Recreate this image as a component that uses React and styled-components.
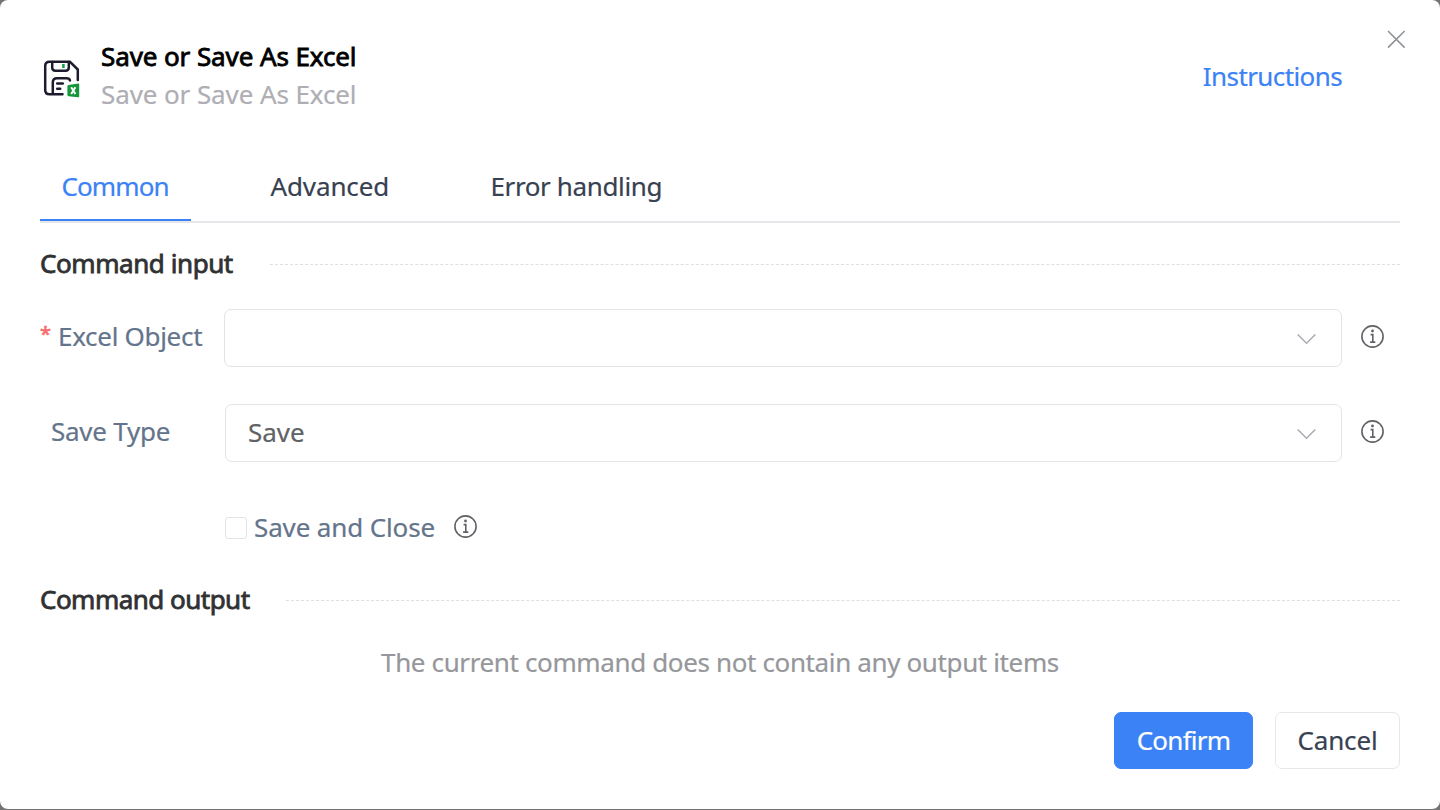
import React from 'react';
import styled, { createGlobalStyle } from 'styled-components';

const GlobalStyle = createGlobalStyle`
  * { box-sizing: border-box; }
  body {
    margin: 0;
    background: #737373;
    font-family: "Noto Sans", "Open Sans", sans-serif;
    font-size: 26px;
    line-height: 38px;
    color: #374151;
  }
`;

const Dialog = styled.main`
  position: relative;
  display: flex;
  flex-direction: column;
  width: 1440px;
  height: 809px;
  padding: 38px 40px 40px;
  background: #fff;
  border-radius: 8px;
  overflow: hidden;
`;

const Text = styled.span`
  display: block;
  margin: -1px 0 1px;
  white-space: nowrap;
  letter-spacing: ${(p) => p.$track || 0}px;
  -webkit-text-stroke: 0.2px currentColor;
`;

const Header = styled.header`
  display: flex;
  align-items: center;
  height: 76px;
`;

const FileIcon = styled.svg`
  flex: none;
  width: 44px;
  height: 44px;
  margin-top: 9px;
`;

const Titles = styled.div`
  display: flex;
  flex-direction: column;
  flex: 1;
  margin-left: 17px;
`;

const Title = styled(Text)`
  color: #000;
  -webkit-text-stroke: 0.8px #000;
`;

const Subtitle = styled(Text)`
  color: #aeaeb4;
`;

const Instructions = styled(Text)`
  margin: 0 58px 0 0;
  color: #3b82f6;
`;

const CloseButton = styled.button`
  position: absolute;
  top: 30px;
  right: 34px;
  width: 20px;
  height: 20px;
  padding: 0;
  border: 0;
  background: none;
  svg { display: block; }
`;

const Tabs = styled.nav`
  display: flex;
  flex: none;
  gap: 58px;
  height: 69px;
  margin-top: 40px;
  padding-top: 14px;
  border-bottom: 2px solid #e5e7eb;
`;

const Tab = styled.div`
  display: flex;
  flex: none;
  width: ${(p) => p.$width}px;
  height: 53px;
  padding-left: 21.5px;
  color: ${(p) => (p.$active ? '#3b82f6' : '#374151')};
  border-bottom: 2px solid ${(p) => (p.$active ? '#3b82f6' : 'transparent')};
`;

const Section = styled.div`
  display: flex;
  align-items: center;
  height: 38px;
  margin-top: ${(p) => p.$top}px;
`;

const SectionTitle = styled(Text)`
  width: ${(p) => p.$width}px;
  color: #303133;
  -webkit-text-stroke: 0.8px #303133;
`;

const Rule = styled.div`
  flex: 1;
  border-top: 1px dashed #dcdfe6;
`;

const Row = styled.div`
  display: flex;
  align-items: center;
  height: 58px;
  margin-top: ${(p) => p.$top}px;
`;

const Label = styled.label`
  display: flex;
  flex: none;
  width: ${(p) => p.$width}px;
  padding-left: ${(p) => p.$indent || 0}px;
  padding-bottom: 2px;
  color: #64748b;
`;

const Required = styled.span`
  width: 18px;
  margin: -3px 0 3px;
  color: #f56c6c;
  font-size: 20px;
  -webkit-text-stroke: 0.6px currentColor;
`;

const Select = styled.div`
  display: flex;
  align-items: center;
  justify-content: space-between;
  flex: 1;
  height: 58px;
  padding: 0 25px 0 22px;
  border: 1px solid #e4e4e7;
  border-radius: 7px;
  color: #606266;
`;

const ChevronIcon = styled.svg`
  flex: none;
  width: 19px;
  height: 12px;
  margin-top: 1px;
`;

const InfoSlot = styled.span`
  flex: none;
  display: flex;
  width: 58px;
  padding: 0 0 3px 18px;
`;

const Checkbox = styled.span`
  flex: none;
  width: 22px;
  height: 22px;
  margin-right: 7px;
  border: 1px solid #e4e4e7;
  border-radius: 3px;
`;

const CheckRow = styled.div`
  display: flex;
  align-items: center;
  height: 38px;
  margin: 47px 0 0 185px;
  color: #64748b;
`;

const Empty = styled.div`
  display: flex;
  justify-content: center;
  margin-top: 25px;
  color: #96979b;
`;

const Footer = styled.footer`
  display: flex;
  justify-content: flex-end;
  gap: 22px;
  margin-top: auto;
`;

const Button = styled.button`
  display: flex;
  align-items: center;
  justify-content: center;
  width: ${(p) => p.$width}px;
  height: 57px;
  padding: 0;
  border: 1px solid ${(p) => (p.$primary ? '#3b82f6' : '#e5e7eb')};
  border-radius: 7px;
  background: ${(p) => (p.$primary ? '#3b82f6' : '#fff')};
  color: ${(p) => (p.$primary ? '#fff' : '#374151')};
  font: inherit;
`;

const SaveExcelIcon = () => (
  <FileIcon viewBox="0 0 44 44" fill="none">
    <g stroke="#1d1b2e" strokeWidth="2.5" strokeLinecap="round" strokeLinejoin="round">
      <path d="M22.5 35.3H9.5Q5.2 35.3 5.2 31V7Q5.2 2.7 9.5 2.7H29.8L37.8 10.5V21" />
      <path d="M12.2 3V8.5Q12.2 11.7 15.5 11.7H25.5Q28.8 11.7 28.8 8.5V3" />
      <path d="M12.8 34.5V23.5Q12.8 19.2 17 19.2H26.5Q29.5 19.2 30 21.5" />
      <path d="M17.2 24.4H22.8M17.2 29.8H20.2" />
    </g>
    <path d="M23.4 4.9V9" stroke="#16a34a" strokeWidth="2.6" />
    <path d="M28.6 26L38 24.6Q39.2 24.5 39.2 25.6V37.3Q39.2 38.5 38 38.3L28.6 37.3Q27.4 37.1 27.4 36V27.3Q27.4 26.2 28.6 26Z" fill="#15953c" />
    <path d="M31.2 28.3L35.4 35M35.4 28.3L31.2 35" stroke="#fff" strokeWidth="2" />
  </FileIcon>
);

const Info = () => (
  <svg width="25" height="25" viewBox="0 0 25 25" fill="none" stroke="#606266">
    <circle cx="12.5" cy="12.5" r="10.6" strokeWidth="1.6" />
    <circle cx="12.5" cy="7" r="1.4" fill="#606266" stroke="none" />
    <path d="M10.6 10.6H12.8V18M10.1 18.1H15.3" strokeWidth="1.6" />
  </svg>
);

const Chevron = () => (
  <ChevronIcon viewBox="0 0 19 12" fill="none">
    <path d="M0.7 1.5L9.5 10.2L18.3 1.5" stroke="#a8abb2" strokeWidth="1.5" />
  </ChevronIcon>
);

export default function App() {
  return (
    <>
      <GlobalStyle />
      <Dialog>
        <Header>
          <SaveExcelIcon />
          <Titles>
            <Title $track={-0.1}>Save or Save As Excel</Title>
            <Subtitle $track={-0.1}>Save or Save As Excel</Subtitle>
          </Titles>
          <Instructions $track={-0.6}>Instructions</Instructions>
        </Header>
        <CloseButton aria-label="Close">
          <svg width="20" height="20" viewBox="0 0 20 20">
            <path d="M2 1L18.6 17.6M18.6 1L2 17.6" stroke="#909399" strokeWidth="1.6" />
          </svg>
        </CloseButton>
        <Tabs>
          <Tab $active $width={151}><Text $track={-0.9}>Common</Text></Tab>
          <Tab $width={162}><Text $track={-0.12}>Advanced</Text></Tab>
          <Tab $width={216}><Text $track={-0.38}>Error handling</Text></Tab>
        </Tabs>
        <Section $top={22}>
          <SectionTitle $width={230} $track={-0.43}>Command input</SectionTitle>
          <Rule />
        </Section>
        <Row $top={26}>
          <Label $width={184}><Required>*</Required><Text $track={-0.3}>Excel Object</Text></Label>
          <Select><span /><Chevron /></Select>
          <InfoSlot><Info /></InfoSlot>
        </Row>
        <Row $top={37}>
          <Label $width={185} $indent={11}><Text $track={-0.25}>Save Type</Text></Label>
          <Select><Text>Save</Text><Chevron /></Select>
          <InfoSlot><Info /></InfoSlot>
        </Row>
        <CheckRow>
          <Checkbox />
          <Text $track={-0.13}>Save and Close</Text>
          <InfoSlot><Info /></InfoSlot>
        </CheckRow>
        <Section $top={34}>
          <SectionTitle $width={246} $track={-0.52}>Command output</SectionTitle>
          <Rule />
        </Section>
        <Empty><Text $track={-0.37}>The current command does not contain any output items</Text></Empty>
        <Footer>
          <Button $primary $width={139}><Text $track={-0.75}>Confirm</Text></Button>
          <Button $width={125}><Text $track={-0.15}>Cancel</Text></Button>
        </Footer>
      </Dialog>
    </>
  );
}
